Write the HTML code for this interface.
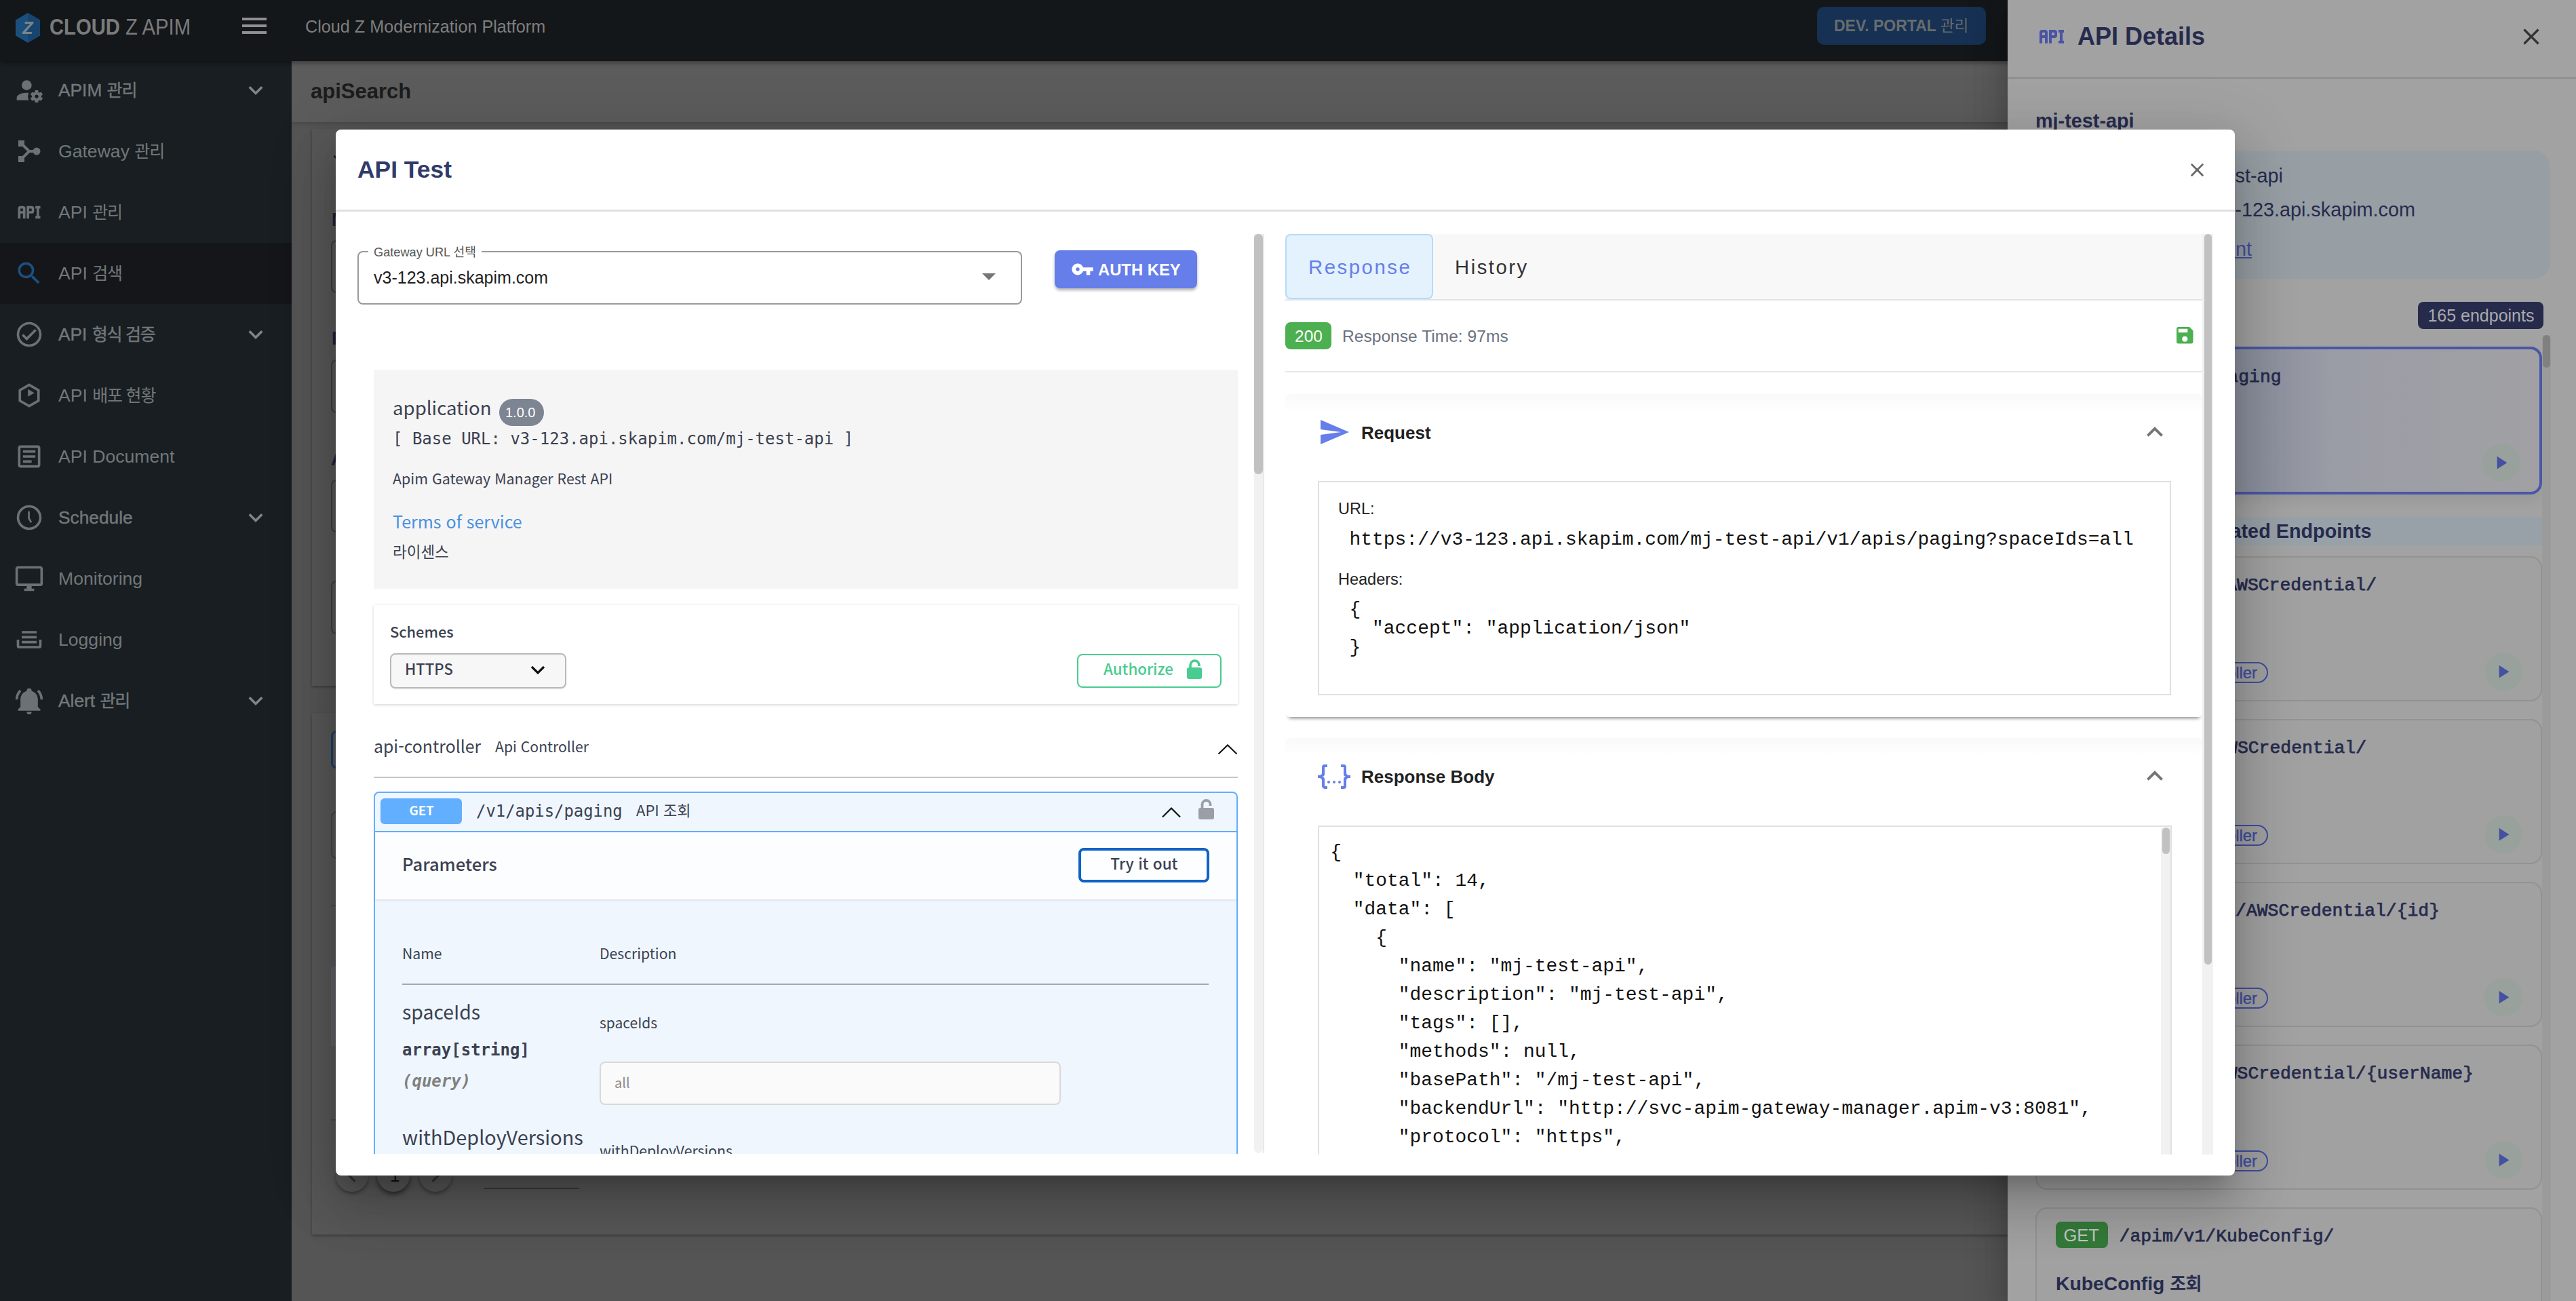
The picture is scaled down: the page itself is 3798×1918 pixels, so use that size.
<!DOCTYPE html>
<html lang="ko">
<head>
<meta charset="utf-8">
<title>CLOUD Z APIM</title>
<style>
*{box-sizing:border-box;margin:0;padding:0}
html,body{width:3798px;height:1918px;overflow:hidden;background:#555}
body{font-family:"Liberation Sans","Noto Sans CJK KR",sans-serif;position:relative;color:#222;font-size:25px}
.a{position:absolute;white-space:pre;line-height:1}
.sw{font-family:"Noto Sans CJK KR","Liberation Sans",sans-serif}
.mono{font-family:"DejaVu Sans Mono","Liberation Mono",monospace}
.lmono{font-family:"Liberation Mono","DejaVu Sans Mono",monospace}
.b{font-weight:bold}
svg{position:absolute;display:block;overflow:visible}
/* ---------- app shell ---------- */
#hdr{position:absolute;left:0;top:0;width:3798px;height:90px;background:#13171a;z-index:2;box-shadow:0 3px 6px rgba(0,0,0,.35)}
#side{position:absolute;left:0;top:88px;width:430px;height:1830px;background:#181e21;z-index:1}
#side .it{position:absolute;left:0;width:430px;height:90px}
#side .it.on{background:#14161a}
#side .it span{position:absolute;left:86px;top:0;line-height:90px;font-size:26.6px;color:#72777a;white-space:pre}
#side .it span i.k{font-style:normal;font-size:25px;letter-spacing:-1.2px}
#side .it.b span{font-size:26.3px;font-weight:normal;-webkit-text-stroke:.45px #72777a}
#side .it svg{left:21px;top:23px;width:44px;height:44px;fill:#6b7174}
#side .it svg.chev{left:356px;top:24px;width:42px;height:42px;fill:#80858a}
#band{position:absolute;left:430px;top:90px;width:3368px;height:90px;background:#5c5c5c;box-shadow:0 3px 6px rgba(0,0,0,.14)}
.card{position:absolute;background:#585858;box-shadow:0 2px 4px rgba(0,0,0,.3)}
/* ---------- drawer ---------- */
#drw{position:absolute;left:2960px;top:0;width:838px;height:1918px;background:#a2a2a2;box-shadow:0 16px 20px -10px rgba(0,0,0,.2),0 32px 48px 4px rgba(0,0,0,.14),0 12px 60px 10px rgba(0,0,0,.12);overflow:hidden;z-index:3}
/* ---------- modal ---------- */
#mod{position:absolute;left:495px;top:191px;width:2800px;height:1542px;background:#fff;border-radius:8px;box-shadow:0 22px 30px -14px rgba(0,0,0,.2),0 48px 76px 6px rgba(0,0,0,.14),0 18px 92px 16px rgba(0,0,0,.12);overflow:hidden;z-index:5}

i.k2{font-style:normal;font-size:26px;letter-spacing:-.5px}

</style>
</head>
<body>
<!-- APP SHELL -->
<div id="hdr">
  <svg style="left:21px;top:18px;width:40px;height:46px" viewBox="0 0 40 46"><polygon points="20,1 38,11.5 38,34.5 20,45 2,34.5 2,11.5" fill="#1b4f7e"/><polygon points="20,1 38,11.5 38,34.5 20,45" fill="#18456f"/><text x="20" y="32" text-anchor="middle" font-family="Liberation Sans" font-weight="bold" font-style="italic" font-size="25" fill="#7f8487">Z</text></svg>
  <div class="a" style="left:73px;top:22px;font-size:32.5px;color:#7b7b7b;transform:scaleX(.9);transform-origin:0 0;line-height:36px"><b>CLOUD</b> Z APIM</div>
  <svg style="left:351px;top:14px;width:48px;height:48px" viewBox="0 0 24 24"><path fill="#909090" d="M3,6H21V8H3V6M3,11H21V13H3V11M3,16H21V18H3V16Z"/></svg>
  <div class="a" style="left:450px;top:24px;font-size:25.2px;line-height:30px;color:#7e7e7e">Cloud Z Modernization Platform</div>
  <div class="a" style="left:2679px;top:10px;width:249px;height:56px;background:#163153;border-radius:10px"></div>
  <div class="a b" style="left:2704px;top:22px;font-size:23px;line-height:32px;color:#686c6e">DEV. PORTAL <span style="font-weight:normal;font-size:22.5px">관리</span></div>
</div>
<div id="side">
  <div class="it b" style="top:0"><svg viewBox="0 0 24 24"><path d="M10 4A4 4 0 0 0 6 8A4 4 0 0 0 10 12A4 4 0 0 0 14 8A4 4 0 0 0 10 4M17 12C16.87 12 16.76 12.09 16.74 12.21L16.55 13.53C16.25 13.66 15.96 13.82 15.7 14L14.46 13.5C14.35 13.5 14.22 13.5 14.15 13.63L13.15 15.36C13.09 15.47 13.11 15.6 13.21 15.68L14.27 16.5C14.25 16.67 14.24 16.83 14.24 17C14.24 17.17 14.25 17.33 14.27 17.5L13.21 18.32C13.12 18.4 13.09 18.53 13.15 18.64L14.15 20.37C14.21 20.5 14.34 20.5 14.46 20.5L15.7 20C15.96 20.18 16.24 20.35 16.55 20.47L16.74 21.79C16.76 21.91 16.86 22 17 22H19C19.11 22 19.22 21.91 19.24 21.79L19.43 20.47C19.73 20.34 20 20.18 20.27 20L21.5 20.5C21.63 20.5 21.76 20.5 21.83 20.37L22.83 18.64C22.89 18.53 22.86 18.4 22.77 18.32L21.7 17.5C21.72 17.33 21.74 17.17 21.74 17C21.74 16.83 21.73 16.67 21.7 16.5L22.76 15.68C22.85 15.6 22.88 15.47 22.82 15.36L21.82 13.63C21.76 13.5 21.63 13.5 21.5 13.5L20.27 14C20 13.82 19.73 13.65 19.42 13.53L19.23 12.21C19.22 12.09 19.11 12 19 12H17M10 14C5.58 14 2 15.79 2 18V20H11.68A7 7 0 0 1 11 17A7 7 0 0 1 11.64 14.09C11.11 14.03 10.56 14 10 14M18 15.5C18.83 15.5 19.5 16.17 19.5 17C19.5 17.83 18.83 18.5 18 18.5C17.16 18.5 16.5 17.83 16.5 17C16.5 16.17 17.17 15.5 18 15.5Z"/></svg><span>APIM <i class="k">관리</i></span><svg class="chev" viewBox="0 0 24 24"><path d="M7.41,8.58L12,13.17L16.59,8.58L18,10L12,16L6,10L7.41,8.58Z"/></svg></div>
  <div class="it" style="top:90px"><svg viewBox="0 0 44 44"><rect x="6" y="6" width="9" height="9"/><rect x="6" y="29" width="9" height="9"/><circle cx="33" cy="22" r="5.5"/><path d="M10.5 10.5L22 22H33M10.5 33.5L22 22" fill="none" stroke="#6b7174" stroke-width="4"/></svg><span>Gateway <i class="k">관리</i></span></div>
  <div class="it" style="top:180px"><svg viewBox="0 0 24 24"><path d="M7 7H5A2 2 0 0 0 3 9V17H5V13H7V17H9V9A2 2 0 0 0 7 7M7 11H5V9H7M14 7H10V17H12V13H14A2 2 0 0 0 16 11V9A2 2 0 0 0 14 7M14 11H12V9H14M20 9V15H21V17H17V15H18V9H17V7H21V9Z"/></svg><span>API <i class="k">관리</i></span></div>
  <div class="it on" style="top:270px"><svg viewBox="0 0 24 24" style="fill:#1d4f80"><path d="M9.5,3A6.5,6.5 0 0,1 16,9.5C16,11.11 15.41,12.59 14.44,13.73L14.71,14H15.5L20.5,19L19,20.5L14,15.5V14.71L13.73,14.44C12.59,15.41 11.11,16 9.5,16A6.5,6.5 0 0,1 3,9.5A6.5,6.5 0 0,1 9.5,3M9.5,5C7,5 5,7 5,9.5C5,12 7,14 9.5,14C12,14 14,12 14,9.5C14,7 12,5 9.5,5Z"/></svg><span>API <i class="k">검색</i></span></div>
  <div class="it b" style="top:360px"><svg viewBox="0 0 24 24"><path d="M12 2C6.5 2 2 6.5 2 12S6.5 22 12 22 22 17.5 22 12 17.5 2 12 2M12 20C7.59 20 4 16.41 4 12S7.59 4 12 4 20 7.59 20 12 16.41 20 12 20M16.59 7.58L10 14.17L7.41 11.59L6 13L10 17L18 9L16.59 7.58Z"/></svg><span>API <i class="k">형식 검증</i></span><svg class="chev" viewBox="0 0 24 24"><path d="M7.41,8.58L12,13.17L16.59,8.58L18,10L12,16L6,10L7.41,8.58Z"/></svg></div>
  <div class="it" style="top:450px"><svg viewBox="0 0 24 24"><path d="M12 2.3L3.5 7.2V16.8L12 21.7L20.5 16.8V7.2Z M12 4.6L18.5 8.35V15.65L12 19.4L5.5 15.65V8.35Z M11 7V13L16.2 10Z" fill-rule="evenodd"/></svg><span>API <i class="k">배포 현황</i></span></div>
  <div class="it" style="top:540px"><svg viewBox="0 0 24 24"><path d="M5,3C3.89,3 3,3.89 3,5V19C3,20.11 3.89,21 5,21H19C20.11,21 21,20.11 21,19V5C21,3.89 20.11,3 19,3H5M5,5H19V19H5V5M7,7V9H17V7H7M7,11V13H17V11H7M7,15V17H14V15H7Z"/></svg><span>API Document</span></div>
  <div class="it b" style="top:630px"><svg viewBox="0 0 24 24"><path d="M12,20A8,8 0 0,0 20,12A8,8 0 0,0 12,4A8,8 0 0,0 4,12A8,8 0 0,0 12,20M12,2A10,10 0 0,1 22,12A10,10 0 0,1 12,22C6.47,22 2,17.5 2,12A10,10 0 0,1 12,2M11,7H12.5V12.3L14.3,15.6L13,16.3L11,12.7Z"/></svg><span>Schedule</span><svg class="chev" viewBox="0 0 24 24"><path d="M7.41,8.58L12,13.17L16.59,8.58L18,10L12,16L6,10L7.41,8.58Z"/></svg></div>
  <div class="it" style="top:720px"><svg viewBox="0 0 24 24"><path d="M21,16H3V4H21M21,2H3C1.89,2 1,2.89 1,4V16A2,2 0 0,0 3,18H10V20H8V22H16V20H14V18H21A2,2 0 0,0 23,16V4C23,2.89 22.1,2 21,2Z"/></svg><span>Monitoring</span></div>
  <div class="it" style="top:810px"><svg viewBox="0 0 24 24"><path d="M18 5H6V7H18M6 9H18V11H6M2 12H4V17H20V12H22V17A2 2 0 0 1 20 19H4A2 2 0 0 1 2 17M18 13H6V15H18Z"/></svg><span>Logging</span></div>
  <div class="it b" style="top:900px"><svg viewBox="0 0 24 24"><path d="M21,19V20H3V19L5,17V11C5,7.9 7.03,5.17 10,4.29C10,4.19 10,4.1 10,4A2,2 0 0,1 12,2A2,2 0 0,1 14,4C14,4.1 14,4.19 14,4.29C16.97,5.17 19,7.9 19,11V17L21,19M14,21A2,2 0 0,1 12,23A2,2 0 0,1 10,21M19.75,3.19L18.33,4.61C20.04,6.3 21,8.6 21,11H23C23,8.07 21.84,5.25 19.75,3.19M1,11H3C3,8.6 3.96,6.3 5.67,4.61L4.25,3.19C2.16,5.25 1,8.07 1,11Z"/></svg><span>Alert <i class="k">관리</i></span><svg class="chev" viewBox="0 0 24 24"><path d="M7.41,8.58L12,13.17L16.59,8.58L18,10L12,16L6,10L7.41,8.58Z"/></svg></div>
</div>
<div id="band"><div class="a b" style="left:28px;top:27px;font-size:31px;line-height:36px;color:#1c1c1c">apiSearch</div></div>
<div class="card" style="left:460px;top:190px;width:3338px;height:821px">
  <svg style="left:24px;top:28px;width:30px;height:30px" viewBox="0 0 24 24"><path fill="#1a1a1a" d="M7.41,8.58L12,13.17L16.59,8.58L18,10L12,16L6,10L7.41,8.58Z"/></svg>
  <div class="a b" style="left:29px;top:121px;font-size:27px;color:#1f2136">Namespace</div>
  <div class="a" style="left:28px;top:164px;width:640px;height:78px;border:2px solid #3e3e3e;border-radius:8px"></div>
  <div class="a b" style="left:29px;top:296px;font-size:27px;color:#1f2136">Project</div>
  <div class="a" style="left:28px;top:340px;width:640px;height:79px;border:2px solid #3e3e3e;border-radius:8px"></div>
  <div class="a b" style="left:28px;top:474px;font-size:27px;color:#1f2136">API Name</div>
  <div class="a" style="left:28px;top:517px;width:640px;height:78px;border:2px solid #3e3e3e;border-radius:8px"></div>
  <div class="a" style="left:28px;top:666px;width:640px;height:79px;border:2px solid #3e3e3e;border-radius:8px"></div>
</div>
<div class="card" style="left:460px;top:1051px;width:3338px;height:769px">
  <div class="a" style="left:28px;top:26px;width:300px;height:56px;border:3px solid #1d3f66;border-radius:8px"></div>
  <div class="a" style="left:28px;top:145px;width:640px;height:70px;border:2px solid #444;border-radius:8px"></div>
  <div class="a" style="left:28px;top:283px;width:3200px;height:2px;background:#4a4a4a"></div>
  <div class="a" style="left:28px;top:374px;width:3200px;height:117px;background:#5f5f66"></div>
  <div class="a" style="left:28px;top:599px;width:3200px;height:2px;background:#4a4a4a"></div>
  <div class="a" style="left:35px;top:658px;width:48px;height:48px;border-radius:50%;background:#585858;box-shadow:0 3px 5px rgba(0,0,0,.35)"></div>
  <div class="a" style="left:96px;top:658px;width:48px;height:48px;border-radius:50%;background:#585858;box-shadow:0 4px 7px rgba(0,0,0,.5)"></div>
  <div class="a" style="left:158px;top:658px;width:48px;height:48px;border-radius:50%;background:#585858;box-shadow:0 3px 5px rgba(0,0,0,.35)"></div>
  <div class="a" style="left:253px;top:700px;width:141px;height:2px;background:#3a3a3a"></div>
  <div class="a" style="left:115px;top:664px;font-size:26px;line-height:36px;color:#111">1</div>
  <svg style="left:39px;top:662px;width:40px;height:40px" viewBox="0 0 24 24"><path fill="#333" d="M15.41,16.58L10.83,12L15.41,7.41L14,6L8,12L14,18L15.41,16.58Z"/></svg>
  <svg style="left:162px;top:662px;width:40px;height:40px" viewBox="0 0 24 24"><path fill="#333" d="M8.59,16.58L13.17,12L8.59,7.41L10,6L16,12L10,18L8.59,16.58Z"/></svg>
</div>

<div id="drw"><div class="a" style="left:-2960px;top:0;width:3798px;height:1918px">
<div class="a" style="left:2960px;top:0px;width:838px;height:116px;background:#a2a2a2;border-bottom:2px solid #8c8c8c"></div>
<svg style="left:3001px;top:30px;width:48px;height:48px;" viewBox="0 0 24 24"><path fill="#4a54a4" d="M7 7H5A2 2 0 0 0 3 9V17H5V13H7V17H9V9A2 2 0 0 0 7 7M7 11H5V9H7M14 7H10V17H12V13H14A2 2 0 0 0 16 11V9A2 2 0 0 0 14 7M14 11H12V9H14M20 9V15H21V17H17V15H18V9H17V7H21V9Z"/></svg>
<div class="a" style="top:35.9px;font-size:36px;color:#262b4e;font-family:'Liberation Sans','Noto Sans CJK KR',sans-serif;left:3063px;font-weight:bold;">API Details</div>
<svg style="left:3711.5px;top:34.4px;width:40px;height:40px;" viewBox="0 0 24 24"><path fill="#333" d="M19,6.41L17.59,5L12,10.59L6.41,5L5,6.41L10.59,12L5,17.59L6.41,19L12,13.41L17.59,19L19,17.59L13.41,12L19,6.41Z"/></svg>
<div class="a" style="top:163.9px;font-size:28.8px;color:#262b4e;font-family:'Liberation Sans','Noto Sans CJK KR',sans-serif;left:3001px;font-weight:bold;">mj-test-api</div>
<div class="a" style="left:3001px;top:222px;width:759px;height:189px;background:#989fa4;border-radius:24px"></div>
<div class="a" style="top:244.9px;font-size:28.8px;color:#262b4e;font-family:'Liberation Sans','Noto Sans CJK KR',sans-serif;right:432.0px;">API Name: mj-test-api</div>
<div class="a" style="top:294.9px;font-size:28.8px;color:#262b4e;font-family:'Liberation Sans','Noto Sans CJK KR',sans-serif;right:237.0px;">Gateway URL: v3-123.api.skapim.com</div>
<div class="a" style="top:352.9px;font-size:28.8px;color:#464f9c;font-family:'Liberation Sans','Noto Sans CJK KR',sans-serif;right:478.0px;text-decoration:underline;">API Document</div>
<div class="a" style="left:3565px;top:445px;width:185px;height:40px;background:#262b4c;border-radius:8px"></div>
<div class="a" style="top:453.3px;font-size:25px;color:#aaaaac;font-family:'Liberation Sans','Noto Sans CJK KR',sans-serif;left:3579.4px;">165 endpoints</div>
<div class="a" style="left:3001px;top:510.5px;width:747px;height:218.5px;background:linear-gradient(90deg,#7e8292 0%,#8d919e 45%,#9b9da6 60%,#a1a1a4 100%);border:4px solid #4a56a6;border-radius:17px;box-shadow:0 10px 18px rgba(0,0,0,.06)"></div>
<div class="a" style="left:3030.5px;top:534px;width:77px;height:39px;background:#357a3a;border-radius:8px"></div><div class="a" style="top:541.5px;font-size:25.5px;color:#c2c8c2;font-family:'Liberation Sans','Noto Sans CJK KR',sans-serif;left:3042.5px;">GET</div>
<div class="a" style="top:542.5px;font-size:26.4px;color:#262b4e;font-family:'Liberation Mono','DejaVu Sans Mono',monospace;left:3126px;-webkit-text-stroke:.75px #262b4e;">/v1/apis/paging</div>
<div class="a" style="left:3660px;top:654px;width:56px;height:56px;background:#98a19b;border-radius:50%"></div><svg style="left:3670.5px;top:665.7px;width:32px;height:32px;" viewBox="0 0 24 24"><path fill="#4450a2" d="M8,5.14V19.14L19,12.14L8,5.14Z"/></svg>
<div class="a" style="left:3748px;top:494px;width:13px;height:1424px;background:#9b9b9b"></div>
<div class="a" style="left:3749px;top:494px;width:11px;height:48px;background:#808080;border-radius:6px"></div>
<div class="a" style="left:3001px;top:762px;width:747px;height:42px;background:#98a1a7"></div>
<div class="a" style="top:768.9px;font-size:28.8px;color:#262b4e;font-family:'Liberation Sans','Noto Sans CJK KR',sans-serif;right:301.5px;font-weight:bold;">Related Endpoints</div>
<div class="a" style="left:3001px;top:820px;width:747px;height:214px;background:#a1a1a1;border:2px solid #929292;border-radius:17px"></div>
<div class="a" style="left:3030.5px;top:841px;width:92px;height:39px;background:#357a3a;border-radius:8px"></div><div class="a" style="top:848.5px;font-size:25.5px;color:#c2c8c2;font-family:'Liberation Sans','Noto Sans CJK KR',sans-serif;left:3042.5px;">POST</div>
<div class="a" style="top:849.5px;font-size:26.4px;color:#262b4e;font-family:'Liberation Mono','DejaVu Sans Mono',monospace;right:294.0px;-webkit-text-stroke:.75px #262b4e;">/apim/v1/AWSCredential/</div>
<div class="a" style="top:917.2px;font-size:28.3px;color:#262b4e;font-family:'Liberation Sans','Noto Sans CJK KR',sans-serif;left:3031px;font-weight:bold;">Credential <i class="k2">조회</i></div>
<div class="a" style="left:3031px;top:975.5px;width:313px;height:31.5px;border:2px solid #3f4c9e;border-radius:16px"></div>
<div class="a" style="top:979.9px;font-size:23.8px;color:#3f4c9e;font-family:'Liberation Sans','Noto Sans CJK KR',sans-serif;right:470.0px;-webkit-text-stroke:.4px #3f4c9e;">aws-credential-controller</div>
<div class="a" style="left:3663px;top:962px;width:56px;height:56px;background:#98a19b;border-radius:50%"></div><svg style="left:3673.5px;top:973.7px;width:32px;height:32px;" viewBox="0 0 24 24"><path fill="#4450a2" d="M8,5.14V19.14L19,12.14L8,5.14Z"/></svg>
<div class="a" style="left:3001px;top:1060px;width:747px;height:214px;background:#a1a1a1;border:2px solid #929292;border-radius:17px"></div>
<div class="a" style="left:3030.5px;top:1081px;width:77px;height:39px;background:#357a3a;border-radius:8px"></div><div class="a" style="top:1088.5px;font-size:25.5px;color:#c2c8c2;font-family:'Liberation Sans','Noto Sans CJK KR',sans-serif;left:3042.5px;">GET</div>
<div class="a" style="top:1089.5px;font-size:26.4px;color:#262b4e;font-family:'Liberation Mono','DejaVu Sans Mono',monospace;right:309.0px;-webkit-text-stroke:.75px #262b4e;">/apim/v1/AWSCredential/</div>
<div class="a" style="top:1157.2px;font-size:28.3px;color:#262b4e;font-family:'Liberation Sans','Noto Sans CJK KR',sans-serif;left:3031px;font-weight:bold;">Credential <i class="k2">조회</i></div>
<div class="a" style="left:3031px;top:1215.5px;width:313px;height:31.5px;border:2px solid #3f4c9e;border-radius:16px"></div>
<div class="a" style="top:1219.9px;font-size:23.8px;color:#3f4c9e;font-family:'Liberation Sans','Noto Sans CJK KR',sans-serif;right:470.0px;-webkit-text-stroke:.4px #3f4c9e;">aws-credential-controller</div>
<div class="a" style="left:3663px;top:1202px;width:56px;height:56px;background:#98a19b;border-radius:50%"></div><svg style="left:3673.5px;top:1213.7px;width:32px;height:32px;" viewBox="0 0 24 24"><path fill="#4450a2" d="M8,5.14V19.14L19,12.14L8,5.14Z"/></svg>
<div class="a" style="left:3001px;top:1300px;width:747px;height:214px;background:#a1a1a1;border:2px solid #929292;border-radius:17px"></div>
<div class="a" style="left:3030.5px;top:1321px;width:122px;height:39px;background:#357a3a;border-radius:8px"></div><div class="a" style="top:1328.5px;font-size:25.5px;color:#c2c8c2;font-family:'Liberation Sans','Noto Sans CJK KR',sans-serif;left:3042.5px;">DELETE</div>
<div class="a" style="top:1329.5px;font-size:26.4px;color:#262b4e;font-family:'Liberation Mono','DejaVu Sans Mono',monospace;right:201.0px;-webkit-text-stroke:.75px #262b4e;">/apim/v1/AWSCredential/{id}</div>
<div class="a" style="top:1397.2px;font-size:28.3px;color:#262b4e;font-family:'Liberation Sans','Noto Sans CJK KR',sans-serif;left:3031px;font-weight:bold;">Credential <i class="k2">조회</i></div>
<div class="a" style="left:3031px;top:1455.5px;width:313px;height:31.5px;border:2px solid #3f4c9e;border-radius:16px"></div>
<div class="a" style="top:1459.9px;font-size:23.8px;color:#3f4c9e;font-family:'Liberation Sans','Noto Sans CJK KR',sans-serif;right:470.0px;-webkit-text-stroke:.4px #3f4c9e;">aws-credential-controller</div>
<div class="a" style="left:3663px;top:1442px;width:56px;height:56px;background:#98a19b;border-radius:50%"></div><svg style="left:3673.5px;top:1453.7px;width:32px;height:32px;" viewBox="0 0 24 24"><path fill="#4450a2" d="M8,5.14V19.14L19,12.14L8,5.14Z"/></svg>
<div class="a" style="left:3001px;top:1540px;width:747px;height:214px;background:#a1a1a1;border:2px solid #929292;border-radius:17px"></div>
<div class="a" style="left:3030.5px;top:1561px;width:77px;height:39px;background:#357a3a;border-radius:8px"></div><div class="a" style="top:1568.5px;font-size:25.5px;color:#c2c8c2;font-family:'Liberation Sans','Noto Sans CJK KR',sans-serif;left:3042.5px;">GET</div>
<div class="a" style="top:1569.5px;font-size:26.4px;color:#262b4e;font-family:'Liberation Mono','DejaVu Sans Mono',monospace;right:151.0px;-webkit-text-stroke:.75px #262b4e;">/apim/v1/AWSCredential/{userName}</div>
<div class="a" style="top:1637.2px;font-size:28.3px;color:#262b4e;font-family:'Liberation Sans','Noto Sans CJK KR',sans-serif;left:3031px;font-weight:bold;">Credential <i class="k2">조회</i></div>
<div class="a" style="left:3031px;top:1695.5px;width:313px;height:31.5px;border:2px solid #3f4c9e;border-radius:16px"></div>
<div class="a" style="top:1699.9px;font-size:23.8px;color:#3f4c9e;font-family:'Liberation Sans','Noto Sans CJK KR',sans-serif;right:470.0px;-webkit-text-stroke:.4px #3f4c9e;">aws-credential-controller</div>
<div class="a" style="left:3663px;top:1682px;width:56px;height:56px;background:#98a19b;border-radius:50%"></div><svg style="left:3673.5px;top:1693.7px;width:32px;height:32px;" viewBox="0 0 24 24"><path fill="#4450a2" d="M8,5.14V19.14L19,12.14L8,5.14Z"/></svg>
<div class="a" style="left:3001px;top:1780px;width:747px;height:214px;background:#a1a1a1;border:2px solid #929292;border-radius:17px"></div>
<div class="a" style="left:3030.5px;top:1801px;width:77px;height:39px;background:#357a3a;border-radius:8px"></div><div class="a" style="top:1808.5px;font-size:25.5px;color:#c2c8c2;font-family:'Liberation Sans','Noto Sans CJK KR',sans-serif;left:3042.5px;">GET</div>
<div class="a" style="top:1809.5px;font-size:26.4px;color:#262b4e;font-family:'Liberation Mono','DejaVu Sans Mono',monospace;left:3124.6px;-webkit-text-stroke:.75px #262b4e;">/apim/v1/KubeConfig/</div>
<div class="a" style="top:1877.7px;font-size:28.3px;color:#262b4e;font-family:'Liberation Sans','Noto Sans CJK KR',sans-serif;left:3031px;font-weight:bold;">KubeConfig <i class="k2">조회</i></div>
</div></div>
<div id="mod">
<div class="a" style="left:-495px;top:-191px;width:3798px;height:1918px">
<div class="a" style="top:233.2px;font-size:35.4px;color:#313b6b;font-family:'Liberation Sans','Noto Sans CJK KR',sans-serif;left:527px;font-weight:bold;">API Test</div>
<svg style="left:3222.5px;top:234px;width:33px;height:33px;" viewBox="0 0 24 24"><path fill="#666" d="M19,6.41L17.59,5L12,10.59L6.41,5L5,6.41L10.59,12L5,17.59L6.41,19L12,13.41L17.59,19L19,17.59L13.41,12L19,6.41Z"/></svg>
<div class="a" style="left:495px;top:309px;width:2800px;height:3px;background:#e0e0e0"></div>
<div class="a" style="left:527px;top:370px;width:980px;height:79px;border:2px solid #9a9a9a;border-radius:8px"></div>
<div class="a" style="left:543px;top:360px;height:24px;padding:0 8px;background:#fff;font-size:18.2px;line-height:24px;color:#555">Gateway URL 선택</div>
<div class="a" style="top:397.3px;font-size:25px;color:#1f1f1f;font-family:'Liberation Sans','Noto Sans CJK KR',sans-serif;left:551px;">v3-123.api.skapim.com</div>
<svg style="left:1434px;top:383px;width:48px;height:48px;" viewBox="0 0 24 24"><path fill="#757575" d="M7,10L12,15L17,10H7Z"/></svg>
<div class="a" style="left:1555px;top:369px;width:210px;height:56px;background:#667eea;border-radius:8px;box-shadow:0 3px 4px rgba(0,0,0,.3)"></div>
<svg style="left:1579px;top:380px;width:34px;height:34px;" viewBox="0 0 24 24"><path fill="#fff" d="M7 14C5.9 14 5 13.1 5 12S5.9 10 7 10 9 10.9 9 12 8.1 14 7 14M12.6 10C11.8 7.7 9.6 6 7 6C3.7 6 1 8.7 1 12S3.7 18 7 18C9.6 18 11.8 16.3 12.6 14H16V18H20V14H23V10H12.6Z"/></svg>
<div class="a" style="top:385.9px;font-size:23.8px;color:#fff;font-family:'Liberation Sans','Noto Sans CJK KR',sans-serif;left:1619px;font-weight:bold;">AUTH KEY</div>
<div class="a" style="left:495px;top:345px;width:1380px;height:1356px;overflow:hidden"><div class="a" style="left:-495px;top:-345px;width:3798px;height:1918px">
<div class="a" style="left:551px;top:545px;width:1274px;height:323px;background:#f5f5f5"></div>
<div class="a" style="top:587.3px;font-size:27.6px;color:#3b4151;font-family:'Noto Sans CJK KR','Liberation Sans',sans-serif;left:579px;">application</div>
<div class="a" style="left:736px;top:587.5px;width:66px;height:40px;background:#7d8492;border-radius:20px"></div>
<div class="a" style="top:597.7px;font-size:20px;color:#fff;font-family:'Liberation Sans','Noto Sans CJK KR',sans-serif;left:745px;">1.0.0</div>
<div class="a" style="top:635.4px;font-size:24px;color:#3b4151;font-family:'DejaVu Sans Mono','Liberation Mono',monospace;left:579px;">[ Base URL: v3-123.api.skapim.com/mj-test-api ]</div>
<div class="a" style="top:693.8px;font-size:21.4px;color:#3b4151;font-family:'Noto Sans CJK KR','Liberation Sans',sans-serif;left:579px;">Apim Gateway Manager Rest API</div>
<div class="a" style="top:755.8px;font-size:25.0px;color:#4990e2;font-family:'Noto Sans CJK KR','Liberation Sans',sans-serif;left:579px;">Terms of service</div>
<div class="a" style="top:801.2px;font-size:22.5px;color:#3b4151;font-family:'Noto Sans CJK KR','Liberation Sans',sans-serif;left:579px;">라이센스</div>
<div class="a" style="left:551px;top:892px;width:1274px;height:146px;background:#fff;box-shadow:0 1px 4px rgba(0,0,0,.18)"></div>
<div class="a" style="top:920.3px;font-size:21.8px;color:#3b4151;font-family:'Noto Sans CJK KR','Liberation Sans',sans-serif;left:575px;font-weight:500;">Schemes</div>
<div class="a" style="left:575px;top:962.5px;width:260px;height:52px;background:#f7f7f7;border:2px solid #b9b9b9;border-radius:8px;box-shadow:0 1px 2px rgba(0,0,0,.08)"></div>
<div class="a" style="top:973.9px;font-size:22.1px;color:#3b4151;font-family:'Noto Sans CJK KR','Liberation Sans',sans-serif;left:597px;font-weight:500;">HTTPS</div>
<svg style="left:781px;top:979px;width:24px;height:18px" viewBox="0 0 24 18"><path d="M3 4L12 13L21 4" fill="none" stroke="#111" stroke-width="3.2"/></svg>
<div class="a" style="left:1588px;top:964px;width:213px;height:50px;border:2.5px solid #49cc90;border-radius:8px;background:#fff"></div>
<div class="a" style="top:974.3px;font-size:22.3px;color:#49cc90;font-family:'Noto Sans CJK KR','Liberation Sans',sans-serif;left:1627px;font-weight:500;">Authorize</div>
<svg style="left:1749px;top:972px;width:26px;height:30px" viewBox="0 0 26 30"><rect x="1" y="12" width="22" height="17" rx="3" fill="#49cc90"/><path d="M6 13V8.5a6.5 6.5 0 0 1 13 0V10" fill="none" stroke="#49cc90" stroke-width="3.6"/></svg>
<div class="a" style="top:1086.9px;font-size:24.8px;color:#3b4151;font-family:'Noto Sans CJK KR','Liberation Sans',sans-serif;left:551px;">api-controller</div>
<div class="a" style="top:1088.9px;font-size:21.2px;color:#3b4151;font-family:'Noto Sans CJK KR','Liberation Sans',sans-serif;left:730px;">Api Controller</div>
<svg style="left:1793px;top:1093px;width:34px;height:22px" viewBox="0 0 34 22"><path d="M3.5 18.5L17 5.5L30.5 18.5" fill="none" stroke="#111" stroke-width="2.1"/></svg>
<div class="a" style="left:551px;top:1145px;width:1274px;height:2px;background:#c4c6cb"></div>
<div class="a" style="left:551px;top:1167px;width:1274px;height:600px;background:#eff6fd;border:2px solid #61affe;border-radius:8px"></div>
<div class="a" style="left:553px;top:1225px;width:1270px;height:2px;background:#61affe"></div>
<div class="a" style="left:561px;top:1177px;width:120px;height:38px;background:#61affe;border-radius:6px"></div>
<div class="a" style="top:1185.0px;font-size:18.5px;color:#fff;font-family:'Noto Sans CJK KR','Liberation Sans',sans-serif;left:603.5px;font-weight:bold;">GET</div>
<div class="a" style="top:1184.5px;font-size:23.9px;color:#3b4151;font-family:'DejaVu Sans Mono','Liberation Mono',monospace;left:702px;">/v1/apis/paging</div>
<div class="a" style="top:1181.5px;font-size:22px;color:#3b4151;font-family:'Noto Sans CJK KR','Liberation Sans',sans-serif;left:938px;">API 조회</div>
<svg style="left:1711px;top:1186px;width:32px;height:22px" viewBox="0 0 32 22"><path d="M3 18.5L16 5.5L29 18.5" fill="none" stroke="#111" stroke-width="2.2"/></svg>
<svg style="left:1766px;top:1177px;width:26px;height:32px" viewBox="0 0 26 32"><rect x="1" y="14" width="23" height="17" rx="3" fill="#9b9ea5"/><path d="M6.5 15V9a6 6 0 0 1 12 0V11" fill="none" stroke="#9b9ea5" stroke-width="3.8"/></svg>
<div class="a" style="left:553px;top:1227px;width:1270px;height:99px;background:#fcfdfe;box-shadow:0 1px 3px rgba(0,0,0,.12)"></div>
<div class="a" style="top:1259.8px;font-size:25.6px;color:#3b4151;font-family:'Noto Sans CJK KR','Liberation Sans',sans-serif;left:593px;font-weight:500;">Parameters</div>
<div class="a" style="left:1589.5px;top:1250px;width:193px;height:51px;border:4px solid #0f62c8;border-radius:8px;background:#fdfeff"></div>
<div class="a" style="top:1261.2px;font-size:22.5px;color:#3b4151;font-family:'Noto Sans CJK KR','Liberation Sans',sans-serif;left:1637.3px;font-weight:500;">Try it out</div>
<div class="a" style="top:1393.9px;font-size:21.2px;color:#3b4151;font-family:'Noto Sans CJK KR','Liberation Sans',sans-serif;left:593px;">Name</div>
<div class="a" style="top:1393.9px;font-size:21.2px;color:#3b4151;font-family:'Noto Sans CJK KR','Liberation Sans',sans-serif;left:884px;">Description</div>
<div class="a" style="left:593px;top:1450px;width:1189px;height:2px;background:#a3a8b0"></div>
<div class="a" style="top:1476.8px;font-size:28.4px;color:#3b4151;font-family:'Noto Sans CJK KR','Liberation Sans',sans-serif;left:593px;">spaceIds</div>
<div class="a" style="top:1536.4px;font-size:24px;color:#3b4151;font-family:'DejaVu Sans Mono','Liberation Mono',monospace;left:593px;font-weight:bold;">array[string]</div>
<div class="a" style="top:1582.4px;font-size:24px;color:#808080;font-family:'DejaVu Sans Mono','Liberation Mono',monospace;left:593px;font-weight:bold;font-style:italic;">(query)</div>
<div class="a" style="top:1497.2px;font-size:21px;color:#3b4151;font-family:'Noto Sans CJK KR','Liberation Sans',sans-serif;left:884px;">spaceIds</div>
<div class="a" style="left:884px;top:1565px;width:680px;height:64px;background:#fafafa;border:2px solid #d9d9d9;border-radius:8px"></div>
<div class="a" style="top:1585.6px;font-size:20px;color:#8a8a8a;font-family:'Noto Sans CJK KR','Liberation Sans',sans-serif;left:906px;">all</div>
<div class="a" style="top:1661.9px;font-size:28.85px;color:#3b4151;font-family:'Noto Sans CJK KR','Liberation Sans',sans-serif;left:593px;">withDeployVersions</div>
<div class="a" style="top:1684.9px;font-size:21.2px;color:#3b4151;font-family:'Noto Sans CJK KR','Liberation Sans',sans-serif;left:884px;">withDeployVersions</div>
</div></div>
<div class="a" style="left:1849px;top:345px;width:13px;height:1355px;background:#f1f1f1;border-radius:0 0 7px 7px"></div>
<div class="a" style="left:1862px;top:345px;width:2px;height:1355px;background:#e9e9e9"></div>
<div class="a" style="left:1849px;top:345px;width:12.5px;height:354px;background:#c1c1c1;border-radius:6px"></div>
</div>
<div class="a" style="left:-495px;top:-191px;width:3798px;height:1918px">
<div class="a" style="left:1875px;top:345px;width:1400px;height:1357px;overflow:hidden"><div class="a" style="left:-1875px;top:-345px;width:3798px;height:1918px">
<div class="a" style="left:1895px;top:345px;width:1353px;height:98px;background:#f8f8f8;border-bottom:2px solid #e2e2ea"></div>
<div class="a" style="left:1895px;top:345px;width:218px;height:96px;background:#e3f2fd;border:2px solid #b5dbf8;border-radius:8px"></div>
<div class="a" style="top:378.6px;font-size:29.4px;color:#667eea;font-family:'Liberation Sans','Noto Sans CJK KR',sans-serif;left:1929px;letter-spacing:2.5px;">Response</div>
<div class="a" style="top:378.7px;font-size:29.3px;color:#333;font-family:'Liberation Sans','Noto Sans CJK KR',sans-serif;left:2145px;letter-spacing:2.5px;">History</div>
<div class="a" style="left:1895px;top:475px;width:68px;height:40px;background:#4caf50;border-radius:8px"></div>
<div class="a" style="top:483.5px;font-size:24.5px;color:#fff;font-family:'Liberation Sans','Noto Sans CJK KR',sans-serif;left:1909px;">200</div>
<div class="a" style="top:483.5px;font-size:24.6px;color:#6b7280;font-family:'Liberation Sans','Noto Sans CJK KR',sans-serif;left:1979px;">Response Time: 97ms</div>
<svg style="left:3204.7px;top:478.4px;width:32.6px;height:32.6px;" viewBox="0 0 24 24"><path fill="#4caf50" d="M15,9H5V5H15M12,19A3,3 0 0,1 9,16A3,3 0 0,1 12,13A3,3 0 0,1 15,16A3,3 0 0,1 12,19M17,3H5C3.89,3 3,3.9 3,5V19A2,2 0 0,0 5,21H19A2,2 0 0,0 21,19V7L17,3Z"/></svg>
<div class="a" style="left:1895px;top:547px;width:1353px;height:2px;background:#e5e7eb"></div>
<div class="a" style="left:1895px;top:581px;width:1353px;height:476px;background:linear-gradient(#f9f9f9,#fff 26px);border-radius:8px;box-shadow:0 7px 5px -5px rgba(0,0,0,.45)"></div>
<svg style="left:1943px;top:613px;width:48px;height:48px;" viewBox="0 0 24 24"><path fill="#667eea" d="M2,21L23,12L2,3V10L17,12L2,14V21Z"/></svg>
<div class="a" style="top:625.3px;font-size:26px;color:#222;font-family:'Liberation Sans','Noto Sans CJK KR',sans-serif;left:2007px;font-weight:bold;">Request</div>
<svg style="left:3153px;top:613px;width:48px;height:48px;" viewBox="0 0 24 24"><path fill="#757575" d="M7.41,15.41L12,10.83L16.59,15.41L18,14L12,8L6,14L7.41,15.41Z"/></svg>
<div class="a" style="left:1943px;top:709px;width:1258px;height:316px;background:#fff;border:2px solid #e0e0e0"></div>
<div class="a" style="top:738.5px;font-size:23.5px;color:#222;font-family:'Liberation Sans','Noto Sans CJK KR',sans-serif;left:1973px;">URL:</div>
<div class="a" style="top:781.8px;font-size:27.93px;color:#111;font-family:'Liberation Mono','DejaVu Sans Mono',monospace;left:1989.6px;">https://v3-123.api.skapim.com/mj-test-api/v1/apis/paging?spaceIds=all</div>
<div class="a" style="top:842.5px;font-size:23.5px;color:#222;font-family:'Liberation Sans','Noto Sans CJK KR',sans-serif;left:1973px;">Headers:</div>
<div class="a" style="top:885.4px;font-size:27.93px;color:#111;font-family:'Liberation Mono','DejaVu Sans Mono',monospace;left:1989.6px;">{</div>
<div class="a" style="top:913.4px;font-size:27.93px;color:#111;font-family:'Liberation Mono','DejaVu Sans Mono',monospace;left:1989.6px;">  "accept": "application/json"</div>
<div class="a" style="top:941.4px;font-size:27.93px;color:#111;font-family:'Liberation Mono','DejaVu Sans Mono',monospace;left:1989.6px;">}</div>
<div class="a" style="left:1895px;top:1088px;width:1353px;height:700px;background:linear-gradient(#f9f9f9,#fff 26px);border-radius:8px;box-shadow:0 7px 5px -5px rgba(0,0,0,.45)"></div>
<svg style="left:1943px;top:1121px;width:48px;height:48px;" viewBox="0 0 24 24"><path fill="#667eea" d="M5,3H7V5H5V10A2,2 0 0,1 3,12A2,2 0 0,1 5,14V19H7V21H5C3.93,20.73 3,20.1 3,19V15A2,2 0 0,0 1,13H0V11H1A2,2 0 0,0 3,9V5A2,2 0 0,1 5,3M19,3A2,2 0 0,1 21,5V9A2,2 0 0,0 23,11H24V13H23A2,2 0 0,0 21,15V19A2,2 0 0,1 19,21H17V19H19V14A2,2 0 0,1 21,12A2,2 0 0,1 19,10V5H17V3H19M12,15A1,1 0 0,1 13,16A1,1 0 0,1 12,17A1,1 0 0,1 11,16A1,1 0 0,1 12,15M8,15A1,1 0 0,1 9,16A1,1 0 0,1 8,17A1,1 0 0,1 7,16A1,1 0 0,1 8,15M16,15A1,1 0 0,1 17,16A1,1 0 0,1 16,17A1,1 0 0,1 15,16A1,1 0 0,1 16,15Z"/></svg>
<div class="a" style="top:1132.3px;font-size:26px;color:#222;font-family:'Liberation Sans','Noto Sans CJK KR',sans-serif;left:2007px;font-weight:bold;">Response Body</div>
<svg style="left:3153px;top:1120px;width:48px;height:48px;" viewBox="0 0 24 24"><path fill="#757575" d="M7.41,15.41L12,10.83L16.59,15.41L18,14L12,8L6,14L7.41,15.41Z"/></svg>
<div class="a" style="left:1943px;top:1217px;width:1259px;height:600px;background:#fff;border:2px solid #e0e0e0"></div>
<div class="a" style="top:1242.8px;font-size:27.93px;color:#111;font-family:'Liberation Mono','DejaVu Sans Mono',monospace;left:1961.2px;">{</div>
<div class="a" style="top:1284.8px;font-size:27.93px;color:#111;font-family:'Liberation Mono','DejaVu Sans Mono',monospace;left:1961.2px;">  "total": 14,</div>
<div class="a" style="top:1326.8px;font-size:27.93px;color:#111;font-family:'Liberation Mono','DejaVu Sans Mono',monospace;left:1961.2px;">  "data": [</div>
<div class="a" style="top:1368.8px;font-size:27.93px;color:#111;font-family:'Liberation Mono','DejaVu Sans Mono',monospace;left:1961.2px;">    {</div>
<div class="a" style="top:1410.8px;font-size:27.93px;color:#111;font-family:'Liberation Mono','DejaVu Sans Mono',monospace;left:1961.2px;">      "name": "mj-test-api",</div>
<div class="a" style="top:1452.8px;font-size:27.93px;color:#111;font-family:'Liberation Mono','DejaVu Sans Mono',monospace;left:1961.2px;">      "description": "mj-test-api",</div>
<div class="a" style="top:1494.8px;font-size:27.93px;color:#111;font-family:'Liberation Mono','DejaVu Sans Mono',monospace;left:1961.2px;">      "tags": [],</div>
<div class="a" style="top:1536.8px;font-size:27.93px;color:#111;font-family:'Liberation Mono','DejaVu Sans Mono',monospace;left:1961.2px;">      "methods": null,</div>
<div class="a" style="top:1578.8px;font-size:27.93px;color:#111;font-family:'Liberation Mono','DejaVu Sans Mono',monospace;left:1961.2px;">      "basePath": "/mj-test-api",</div>
<div class="a" style="top:1620.8px;font-size:27.93px;color:#111;font-family:'Liberation Mono','DejaVu Sans Mono',monospace;left:1961.2px;">      "backendUrl": "http://svc-apim-gateway-manager.apim-v3:8081",</div>
<div class="a" style="top:1662.8px;font-size:27.93px;color:#111;font-family:'Liberation Mono','DejaVu Sans Mono',monospace;left:1961.2px;">      "protocol": "https",</div>
<div class="a" style="top:1704.8px;font-size:27.93px;color:#111;font-family:'Liberation Mono','DejaVu Sans Mono',monospace;left:1961.2px;">      "createdAt": "2025-01-01T00:00:00"</div>
<div class="a" style="left:3186px;top:1220px;width:14px;height:500px;background:#f1f1f1"></div>
<div class="a" style="left:3188px;top:1220px;width:11px;height:39px;background:#c1c1c1;border-radius:6px"></div>
</div></div>
<div class="a" style="left:3247px;top:345px;width:16px;height:1357px;background:#f1f1f1"></div>
<div class="a" style="left:3249.5px;top:345px;width:11px;height:1077px;background:#c1c1c1;border-radius:6px"></div>
</div>
</div>
</body>
</html>
